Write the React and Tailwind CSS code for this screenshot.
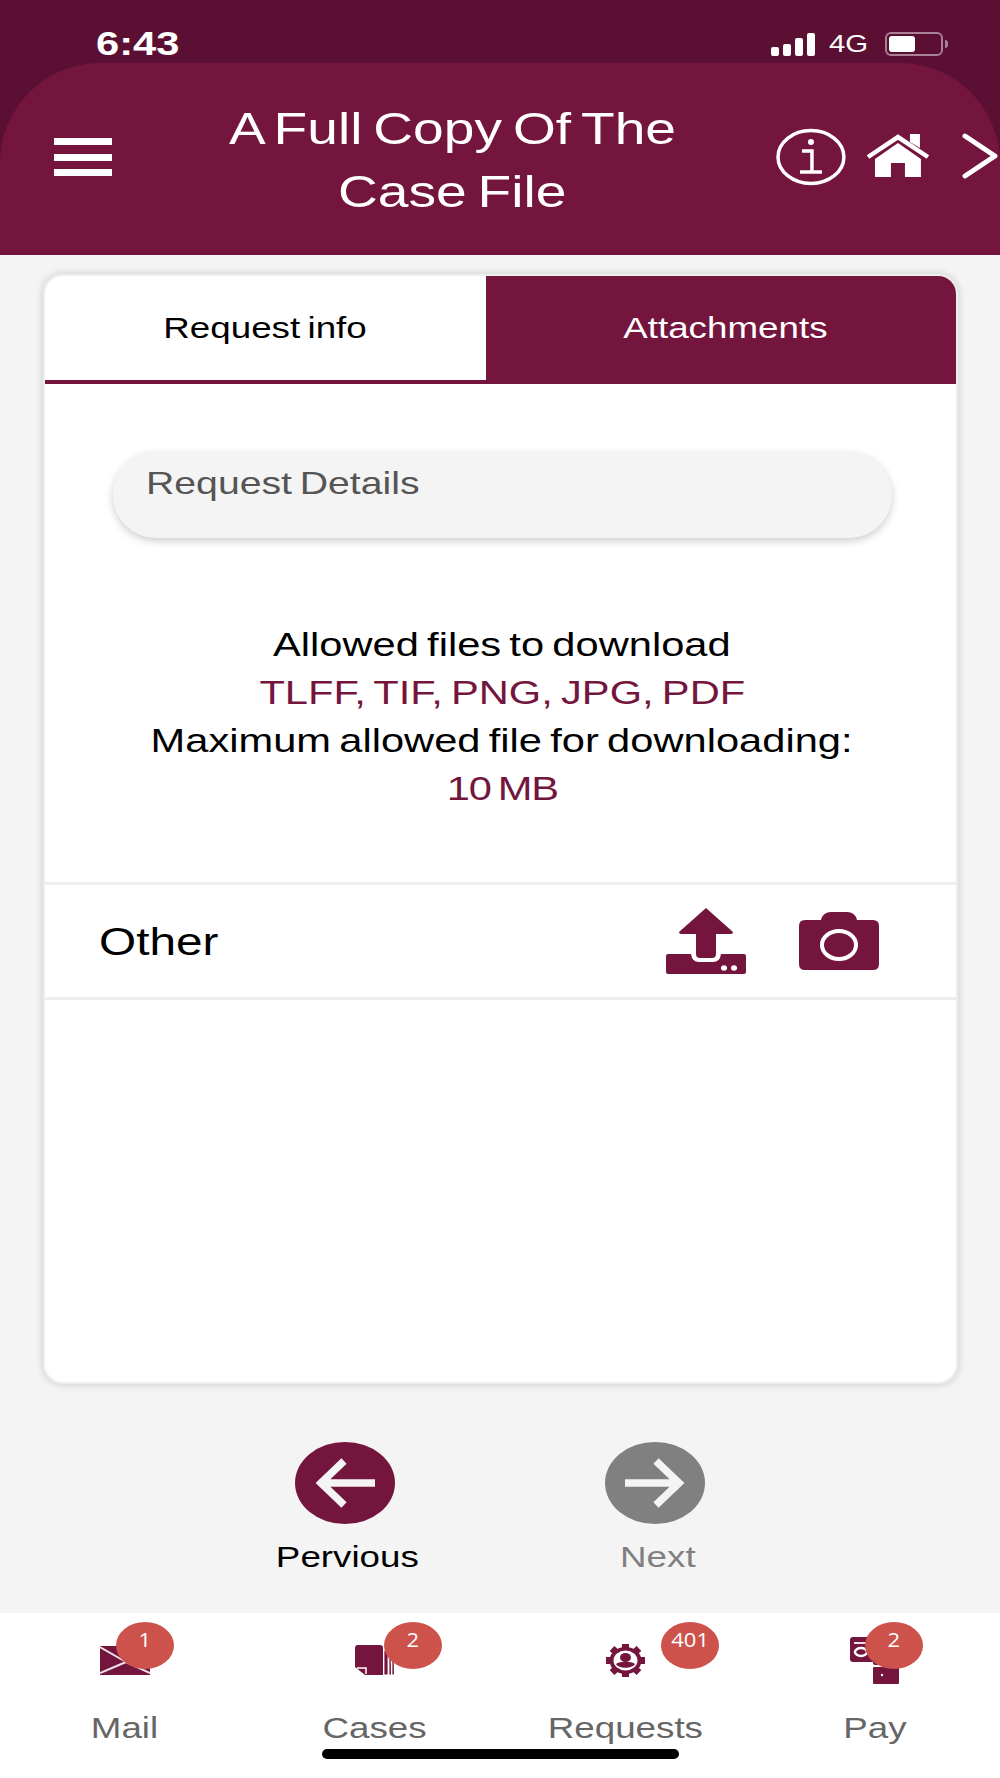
import React from 'react';

// the reference is stretched about 1.2x horizontally, so text is too
const Wide = ({ children, className = '' }) => (
  <span className={`inline-block whitespace-nowrap scale-x-[1.225] [word-spacing:-0.08em] ${className}`}>{children}</span>
);

const Badge = ({ value, className }) => (
  <span className={`absolute top-[9px] flex h-[47px] w-[58px] justify-center rounded-[50%] bg-[#cd524c] pt-[4px] text-[20px] leading-[28px] text-white font-['Open_Sans',sans-serif] ${className}`}>
    <span className="inline-block scale-x-[1.1]">{value}</span>
  </span>
);

const MailIcon = () => (
  <svg width="50" height="29" viewBox="0 0 50 29">
    <rect width="50" height="29" fill="#74153e" />
    <path d="M0 1 L26 16 L0 27 M26 16 L50 27" fill="none" stroke="#f0dfe6" strokeWidth="2" />
  </svg>
);

const CasesIcon = () => (
  <svg width="40" height="30" viewBox="0 0 40 30">
    <path d="M3 0 H25 a3 3 0 0 1 3 3 V30 H10 L0 22 V3 a3 3 0 0 1 3 -3Z" fill="#74153e" />
    <path d="M2 23 H11 V29" fill="none" stroke="#fff" strokeWidth="1.5" />
    <path d="M30 6 V29 H32 V6 M35 10 V29 H36 M38 12 V29 H39" fill="#74153e" stroke="#74153e" strokeWidth="1.2" />
  </svg>
);

const GearIcon = () => (
  <svg width="39" height="33" viewBox="0 0 39 33">
    <g stroke="#74153e" strokeWidth="7" strokeLinecap="butt">
      <path d="M19.5 0 V33 M0 16.5 H39 M6 4.5 L33 28.5 M33 4.5 L6 28.5" />
    </g>
    <ellipse cx="19.5" cy="16.5" rx="16" ry="13.5" fill="#74153e" />
    <ellipse cx="19.5" cy="16.5" rx="12" ry="10" fill="#fff" />
    <ellipse cx="19.5" cy="13.5" rx="5.5" ry="4.5" fill="#74153e" />
    <path d="M10 20 C13 17 26 17 29 20 C26 25 13 25 10 20Z" fill="#74153e" />
  </svg>
);

const PayIcon = () => (
  <svg width="50" height="47" viewBox="0 0 50 47">
    <rect x="0" y="0" width="38" height="25" rx="3" fill="#74153e" />
    <rect x="4" y="5" width="26" height="2" fill="#f0dfe6" />
    <ellipse cx="11" cy="15" rx="6" ry="4" fill="none" stroke="#fff" strokeWidth="2.5" />
    <rect x="23" y="20" width="26" height="8" rx="2" fill="#74153e" />
    <rect x="23" y="30" width="26" height="17" rx="1" fill="#74153e" />
    <circle cx="32" cy="38" r="1.2" fill="#fff" />
  </svg>
);

const UploadIcon = () => (
  <svg width="80" height="67" viewBox="0 0 80 67">
    <path d="M40 0 L67 24 Q67 26 65 26 H50 V46 Q50 50 46 50 H34 Q30 50 30 46 V26 H15 Q13 26 13 24 Z" fill="#74153e" />
    <path d="M2 46 H25 Q26 54 33 54 H47 Q54 54 55 46 H78 Q80 46 80 48 V64 Q80 66 78 66 H2 Q0 66 0 64 V48 Q0 46 2 46Z" fill="#74153e" />
    <ellipse cx="58" cy="60" rx="3" ry="2.7" fill="#fff" />
    <ellipse cx="68" cy="60" rx="3" ry="2.7" fill="#fff" />
  </svg>
);

const CameraIcon = () => (
  <svg width="80" height="58" viewBox="0 0 80 58">
    <path d="M22 8 Q24 0 32 0 H48 Q56 0 58 8 H74 Q80 8 80 14 V52 Q80 58 74 58 H6 Q0 58 0 52 V14 Q0 8 6 8 Z" fill="#74153e" />
    <ellipse cx="40" cy="33" rx="17" ry="14" fill="none" stroke="#fff" strokeWidth="4" />
  </svg>
);

const ArrowButton = ({ dir, color }) => (
  <span className={`flex h-[82px] w-[100px] items-center justify-center rounded-[50%] ${color}`}>
    <svg width="60" height="50" viewBox="0 0 60 50" className={dir === 'right' ? 'rotate-180' : ''}>
      <path d="M4 25 H60 M29 3 L6 25 L29 47" fill="none" stroke="#f4f4f4" strokeWidth="7.5" />
    </svg>
  </span>
);

const navItems = [
  { label: 'Mail', count: 1, icon: <MailIcon />, badge: 'left-[116px]' },
  { label: 'Cases', count: 2, icon: <CasesIcon />, badge: 'left-[134px]' },
  { label: 'Requests', count: 401, icon: <GearIcon />, badge: 'left-[161px]' },
  { label: 'Pay', count: 2, icon: <PayIcon />, badge: 'left-[115px]' },
];

export default function App() {
  return (
    <div className="relative flex h-[1778px] w-[1000px] flex-col overflow-hidden bg-[#f4f4f4] font-['Liberation_Sans',Arial,sans-serif]">
      <div className="bg-[#5a0f33]">
        {/* status bar */}
        <div className="flex h-[63px] items-start pl-[96px] pt-[23px] text-white">
          <Wide className="origin-left text-[34px] font-semibold leading-[40px]">6:43</Wide>
          <div className="ml-auto flex items-center pt-[9px]">
            <div className="flex items-end gap-[4px]">
              <span className="h-[9px] w-[8px] rounded-[2px] bg-white" />
              <span className="h-[12px] w-[8px] rounded-[2px] bg-white" />
              <span className="h-[18px] w-[8px] rounded-[2px] bg-white" />
              <span className="h-[23px] w-[8px] rounded-[2px] bg-white" />
            </div>
            <Wide className="ml-[14px] w-[41px] origin-left text-[24px] leading-[24px]">4G</Wide>
            <div className="ml-[15px] h-[24px] w-[58px] rounded-[6px] border-2 border-[#a98097] p-[2px]">
              <div className="h-full w-[26px] rounded-[3px] bg-white" />
            </div>
            <div className="ml-[2px] mr-[52px] h-[8px] w-[3px] rounded-r-[3px] bg-[#a98097]" />
          </div>
        </div>
        {/* header */}
        <div className="flex h-[192px] rounded-t-[100px] bg-[#74153e] pl-[54px] text-white">
          <div className="mt-[75px] flex h-[38px] w-[58px] flex-col justify-between">
            <span className="h-[7px] bg-white" />
            <span className="h-[7px] bg-white" />
            <span className="h-[7px] bg-white" />
          </div>
          <h1 className="ml-[51px] mt-[34px] w-[580px] text-center text-[45px] font-normal leading-[63px]">
            <Wide>A Full Copy Of The</Wide>
            <br />
            <Wide>Case File</Wide>
          </h1>
          <svg width="70" height="58" viewBox="0 0 70 58" className="ml-[34px] mt-[65px]">
            <ellipse cx="35" cy="29" rx="33" ry="26.5" fill="none" stroke="#fff" strokeWidth="3.5" />
            <circle cx="35" cy="14" r="3" fill="#fff" />
            <path d="M26 23 H36 V44 M24 44 H46" fill="none" stroke="#fff" strokeWidth="3.5" />
          </svg>
          <svg width="64" height="44" viewBox="0 0 64 44" className="ml-[20px] mt-[71px]">
            <path d="M2 23 L32 3 L62 23" fill="none" stroke="#fff" strokeWidth="4.5" />
            <path d="M44 0 H54 V14 L44 8Z" fill="#fff" />
            <path d="M9 25 L32 9 L55 25 V43 H39 V29 H25 V43 H9Z" fill="#fff" />
          </svg>
          <svg width="38" height="46" viewBox="0 0 38 46" className="ml-[32px] mt-[70px]">
            <path d="M3 3 L33 23 L3 43" fill="none" stroke="#fff" strokeWidth="5" strokeLinecap="round" strokeLinejoin="round" />
          </svg>
        </div>
      </div>

      {/* card */}
      <div className="ml-[43px] mt-[19px] h-[1110px] w-[915px] overflow-hidden rounded-[20px] border-2 border-[#eeeeee] bg-white shadow-[0_0_8px_rgba(0,0,0,0.18)]">
        <div className="flex h-[108px]">
          <div className="flex w-[441px] items-center justify-center border-b-[4px] border-[#74153e] text-black">
            <Wide className="text-[30px] leading-[36px]">Request info</Wide>
          </div>
          <div className="flex flex-1 items-center justify-center bg-[#74153e] pb-[4px] pl-[8px] text-white">
            <Wide className="text-[30px] leading-[36px]">Attachments</Wide>
          </div>
        </div>

        <div className="ml-[68px] mt-[68px] h-[86px] w-[779px] rounded-full bg-[#f4f4f4] pl-[33px] pt-[13px] shadow-[0_3px_8px_rgba(0,0,0,0.2)]">
          <Wide className="origin-left text-[32px] leading-[36px] text-[#555555]">Request Details</Wide>
        </div>

        <div className="mt-[82px] pl-[3px] text-center text-[34px] leading-[48px] text-black">
          <div><Wide>Allowed files to download</Wide></div>
          <div className="text-[#74153e]"><Wide>TLFF, TIF, PNG, JPG, PDF</Wide></div>
          <div><Wide>Maximum allowed file for downloading:</Wide></div>
          <div className="text-[#74153e]"><Wide className="tracking-[-1px]">10 MB</Wide></div>
        </div>

        <div className="mt-[70px] flex h-[118px] items-center border-y-[3px] border-[#eeeeee] pl-[54px] pr-[77px]">
          <Wide className="mt-[2px] origin-left text-[39px] leading-[44px] text-black">Other</Wide>
          <div className="ml-auto flex items-center gap-[53px]">
            <UploadIcon />
            <CameraIcon />
          </div>
        </div>
      </div>

      {/* previous / next */}
      <div className="ml-[245px] mt-[58px] flex gap-[110px]">
        <div className="flex w-[200px] flex-col items-center">
          <ArrowButton dir="left" color="bg-[#74153e]" />
          <Wide className="ml-[5px] mt-[15px] text-[30px] leading-[36px] text-black">Pervious</Wide>
        </div>
        <div className="flex w-[200px] flex-col items-center">
          <ArrowButton dir="right" color="bg-[#808080]" />
          <Wide className="ml-[6px] mt-[15px] text-[30px] leading-[36px] text-[#808080]">Next</Wide>
        </div>
      </div>

      {/* bottom nav */}
      <div className="mt-auto grid h-[165px] grid-cols-4 bg-white">
        {navItems.map((item) => (
          <div key={item.label} className="relative flex flex-col items-center">
            <div className="flex h-[94px] items-center">{item.icon}</div>
            <Badge value={item.count} className={item.badge} />
            <Wide className="mt-[3px] text-[30px] leading-[36px] text-[#666666]">{item.label}</Wide>
          </div>
        ))}
      </div>
      {/* home indicator */}
      <div className="absolute bottom-[19px] left-[322px] h-[10px] w-[357px] rounded-full bg-black" />
    </div>
  );
}
